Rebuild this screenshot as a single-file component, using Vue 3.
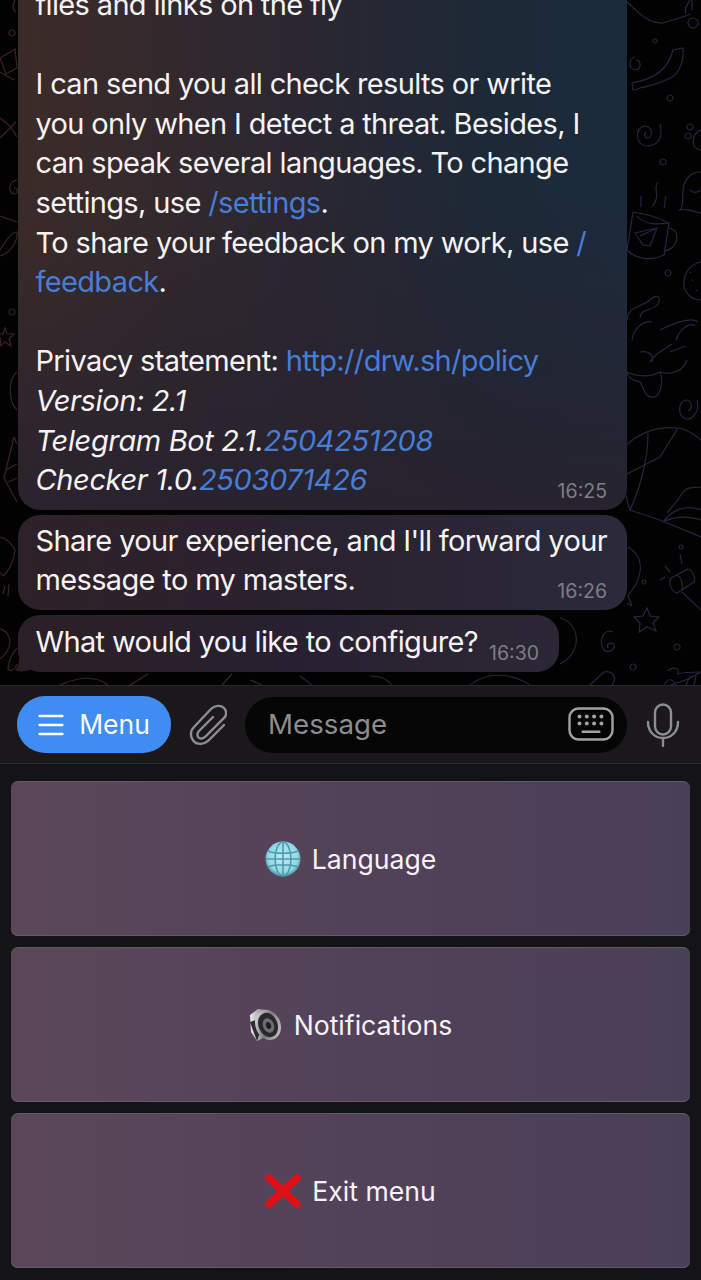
<script setup>
const keys = [
  { id: 'lang', label: 'Language', icon: 'globe' },
  { id: 'notif', label: 'Notifications', icon: 'speaker' },
  { id: 'exit', label: 'Exit menu', icon: 'cross' }
];

// doodles behind the chat, split by tint
const redDoodles = [
  'M15 0 C12 6 13 10 16 12 M12 30 a3 3 0 1 0 0.1 0',
  'M0 58 L15 49 L17 68 L6 74 Z M0 72 L14 80',
  'M0 118 L10 126 L17 137 M0 138 L16 122',
  'M17 180 C8 182 8 192 14 194 C19 194 18 188 14 188',
  'M0 250 C6 240 12 232 17 232 C18 240 12 252 0 256 M0 216 L17 222',
  'M12 309 a3 3 0 1 0 0.1 0',
  'M5 328 L7 334 L14 334 L9 339 L11 346 L5 342 L0 346 L1 339 L-3 334 L3 334 Z',
  'M17 372 C8 378 8 402 17 410',
  'M14 437 L4 478 L17 502 M14 437 L17 444 M6 470 L17 464 M8 482 L17 478',
  'M0 537 C6 538 12 544 15 550 C14 562 8 572 3 576 L0 572',
  'M3 594 L5 586 M8 596 L9 584',
  'M0 629 C6 630 10 636 10 642 C9 650 4 656 0 659',
  'M17 648 C12 654 8 662 8 670 C12 672 16 668 17 664',
  'M60 685 C80 676 96 676 108 685 M130 685 L148 674 M222 685 L232 674 M250 680 L262 685'
];
const blueDoodles = [
  'M627 2 C638 12 648 24 663 23 C672 20 682 18 690 14 M693 18 a5 5 0 1 0 0.1 0 M692 0 V10 M690 0 C686 6 684 10 686 14',
  'M632 83 C650 80 668 72 673 50 L683 48 C684 60 680 72 672 77 C660 84 648 86 640 88 C636 90 633 90 633 90 L632 83',
  'M635 57 C628 58 628 70 636 70 C642 68 641 60 636 60',
  'M655 39 a2 2 0 1 0 0.1 0 M670 95 a3 3 0 1 0 0.1 0',
  'M660 124 C664 140 656 146 646 146 C636 144 634 130 644 126 C652 126 654 136 648 138 C644 138 644 134 646 132',
  'M701 130 C694 132 692 140 694 146 C697 150 701 150 701 150 M690 124 a3 3 0 1 0 0.1 0 M688 133 a3 3 0 1 0 0.1 0',
  'M663 159 a3 3 0 1 0 0.1 0',
  'M641 196 L641 207 M658 182 C652 190 662 194 652 207 M666 196 C664 200 666 204 664 208',
  'M633 212 C645 214 660 218 669 223 L664 255 C650 262 634 258 627 250 Z M637 216 C645 226 660 224 669 223 M669 228 C682 230 678 250 664 251 M635 233 L657 228 L650 246 L643 245 Z M640 236 L657 228',
  'M701 172 C690 172 684 180 683 190 C682 200 684 206 680 210 C688 208 694 212 701 213 M690 190 C694 194 698 192 700 190',
  'M668 270 a3 3 0 1 0 0.1 0',
  'M701 262 C690 264 683 274 684 286 C686 296 694 300 701 300 M692 280 L693 281 M696 290 L697 291 M690 272 L691 273',
  'M627 320 C628 306 640 308 650 300 C656 294 662 296 658 304 C652 312 640 308 640 318 M632 340 C634 326 646 320 652 322 M660 330 C672 324 690 316 698 322 M676 340 C680 328 690 322 695 326',
  'M627 372 C634 376 650 378 660 372 C664 382 660 396 654 397 C644 398 644 388 640 382 C632 380 628 378 627 372 M650 362 C654 354 666 348 672 344 M660 372 C672 376 684 370 687 360 M640 352 C650 350 654 356 652 362 M670 352 L686 346',
  'M697 400 C700 412 692 420 686 419 C677 416 678 402 686 400 C692 400 693 410 688 411',
  'M625 447 C636 434 656 426 677 428 C686 428 694 434 701 440 M678 428 L660 457 L625 475 M648 433 C648 450 644 480 630 510 M625 480 C624 494 628 504 630 510 L660 520 L701 537',
  'M667 513 C672 506 676 504 683 492 C688 486 694 488 701 487 M664 521 C672 510 686 504 701 510 M662 522 C676 516 690 516 701 520',
  'M628 547 C636 552 642 560 640 572 C638 584 632 590 628 596 L632 606 M627 603 L632 606',
  'M681 545 a2 2 0 1 0 0.1 0 M680 554 L682 564 M665 566 L670 572 M660 580 L665 577 M644 580 a2 2 0 1 0 0.1 0',
  'M671 578 L688 569 C692 570 696 578 694 582 L677 593 C672 592 668 584 671 578 M677 575 C681 577 683 583 682 590 M682 592 L701 610',
  'M647 608 L650 616 L659 617 L653 623 L656 631 L647 627 L639 632 L640 623 L634 617 L643 616 Z',
  'M613 632 C604 628 598 640 604 650 C610 654 616 648 614 644 C610 642 606 644 608 648',
  'M677 644 a3 3 0 1 0 0.1 0 M633 664 a3 3 0 1 0 0.1 0',
  'M668 671 C672 666 680 668 678 674 C684 672 694 672 701 672 M664 685 C668 678 672 678 676 685 M686 685 L690 676 M694 685 L696 676',
  'M560 618 C570 620 578 630 576 644 C574 654 568 660 560 664',
  'M300 676 L312 685 M370 676 C380 676 388 680 392 685 M470 685 C486 672 510 672 530 685 M590 685 L604 672 C612 670 618 678 612 685',
  'M700 672 C690 680 680 682 670 685'
];
</script>

<template>
  <div class="screen">
    <section class="chat">
      <svg class="doodles" width="701" height="685" viewBox="0 0 701 685" fill="none">
        <path v-for="d in redDoodles" :key="d" :d="d" stroke="#3a2320" stroke-width="1.2" />
        <path v-for="d in blueDoodles" :key="d" :d="d" stroke="#26253f" stroke-width="1.2" />
      </svg>

      <div class="bubble first">
        <p>files and links on the fly</p>
        <p class="blank"></p>
        <p>I can send you all check results or write</p>
        <p>you only when I detect a threat. Besides, I</p>
        <p>can speak several languages. To change</p>
        <p>settings, use <a>/settings</a>.</p>
        <p>To share your feedback on my work, use <a>/</a></p>
        <p><a>feedback</a>.</p>
        <p class="blank"></p>
        <p>Privacy statement: <a>http://drw.sh/policy</a></p>
        <p><em>Version: 2.1</em></p>
        <p><em>Telegram Bot 2.1.<a>2504251208</a></em></p>
        <p><em>Checker 1.0.<a>2503071426</a></em></p>
        <span class="time">16:25</span>
      </div>

      <div class="bubble second">
        <p>Share your experience, and I'll forward your</p>
        <p>message to my masters.</p>
        <span class="time">16:26</span>
      </div>

      <div class="bubble third">
        <p>What would you like to configure?</p>
        <span class="time">16:30</span>
        <svg class="tail" width="16" height="14" viewBox="0 0 16 14">
          <path d="M16 0 L4 0 C4 5 3 9 0 12.5 C5 14 11 14 16 11 Z" fill="#2b2026" />
        </svg>
      </div>
    </section>

    <section class="inputbar">
      <button class="menu-btn">
        <svg width="26" height="22" viewBox="0 0 26 22" fill="none" stroke="#fff" stroke-width="2.3" stroke-linecap="round">
          <path d="M1.5 2H24.5M1.5 11H24.5M1.5 20H24.5" />
        </svg>
        <span>Menu</span>
      </button>
      <svg class="clip" width="38" height="42" viewBox="0 0 38 42" fill="none" stroke="#8e8e90" stroke-width="2.4" stroke-linecap="round">
        <path d="M35 21 L20 36 C15 41 8 41 4.5 37 C1 33 1 27 5 23 L22 5 C26 1 32 1 35 4 C38 7 38 12 34 15 L17 32 C14 35 11 35 9.5 33.5 C8 32 8 29 10 27 L24 13" />
      </svg>
      <div class="field">
        <span>Message</span>
        <svg width="46" height="36" viewBox="0 0 46 36" fill="none">
          <rect x="1.5" y="1.5" width="43" height="31" rx="9" stroke="#a3a3a3" stroke-width="2.4" />
          <g fill="#a3a3a3">
            <circle cx="11.5" cy="9.5" r="2" /><circle cx="18.8" cy="9.5" r="2" /><circle cx="26.1" cy="9.5" r="2" /><circle cx="33.4" cy="9.5" r="2" />
            <circle cx="11.5" cy="16.5" r="2" /><circle cx="18.8" cy="16.5" r="2" /><circle cx="26.1" cy="16.5" r="2" /><circle cx="33.4" cy="16.5" r="2" />
            <rect x="13.5" y="23.5" width="19" height="2.4" rx="1" />
          </g>
        </svg>
      </div>
      <svg class="mic" width="34" height="44" viewBox="0 0 34 44" fill="none" stroke="#8e8e90" stroke-width="2.4" stroke-linecap="round">
        <rect x="9" y="1.5" width="16" height="30" rx="8" />
        <path d="M2 19 C2 29 9 35 17 35 C25 35 32 29 32 19 M17 35 V43" />
      </svg>
    </section>

    <section class="keyboard">
      <button v-for="k in keys" :key="k.id" class="key">
        <svg v-if="k.icon === 'globe'" class="ico" width="36" height="36" viewBox="0 0 36 36">
          <defs>
            <radialGradient id="gl" cx="50%" cy="45%" r="55%">
              <stop offset="0" stop-color="#bfeaf2" />
              <stop offset="0.78" stop-color="#97d6e3" />
              <stop offset="1" stop-color="#3f8fa2" />
            </radialGradient>
          </defs>
          <circle cx="18" cy="18" r="17.5" fill="url(#gl)" />
          <g fill="none" stroke="#4a9db0" stroke-width="1.6">
            <ellipse cx="18" cy="18" rx="8" ry="17" />
            <path d="M18 1V35M3 10C10 13 26 13 33 10M1 18H35M3 26C10 23 26 23 33 26" />
          </g>
        </svg>
        <svg v-else-if="k.icon === 'speaker'" class="ico" width="34" height="34" viewBox="0 0 34 34">
          <defs>
            <linearGradient id="sp" x1="0" y1="0" x2="1" y2="1">
              <stop offset="0" stop-color="#f2f2f2" />
              <stop offset="0.5" stop-color="#77777a" />
              <stop offset="1" stop-color="#dcdcdc" />
            </linearGradient>
            <linearGradient id="bk" x1="0" y1="0" x2="1" y2="0">
              <stop offset="0" stop-color="#ececec" />
              <stop offset="1" stop-color="#5f5f62" />
            </linearGradient>
          </defs>
          <path d="M1 7 L9 1 L20 2 L14 30 L8 33 L2 24 Z" fill="url(#bk)" />
          <path d="M1 14 L8 33 L12 22 L7 12 Z" fill="#2b2b2e" />
          <ellipse cx="19" cy="17" rx="12.5" ry="15.5" transform="rotate(-22 19 17)" fill="url(#sp)" />
          <ellipse cx="19" cy="17" rx="9.5" ry="12.5" transform="rotate(-22 19 17)" fill="#29292c" />
          <ellipse cx="19.5" cy="17.5" rx="5.5" ry="7.5" transform="rotate(-22 19.5 17.5)" fill="#6e6e72" />
          <ellipse cx="19.5" cy="17.5" rx="2.5" ry="3.5" transform="rotate(-22 19.5 17.5)" fill="#1c1c1f" />
        </svg>
        <svg v-else class="ico" width="36" height="34" viewBox="0 0 36 34" fill="none" stroke="#e30f17" stroke-width="7.5" stroke-linecap="round">
          <path d="M4 4 L32 30M32 4 L4 30" />
        </svg>
        <span>{{ k.label }}</span>
      </button>
    </section>
  </div>
</template>

<style scoped>
.screen {
  width: 701px;
  height: 1280px;
  overflow: hidden;
  display: flex;
  flex-direction: column;
  background: #000;
  color: #fff;
  font-family: Inter, "Liberation Sans", sans-serif;
}
.chat {
  position: relative;
  height: 685px;
  overflow: hidden;
  display: flex;
  flex-direction: column;
  justify-content: flex-end;
  align-items: flex-start;
  gap: 5px;
  padding: 0 0 13px 18px;
  box-sizing: border-box;
  background: #020203;
}
.doodles {
  position: absolute;
  left: 0;
  top: 0;
}
.bubble {
  position: relative;
  flex-shrink: 0;
  box-sizing: border-box;
  padding: 6px 18px 10px 17.5px;
  border-radius: 22px;
  font-size: 29px;
  line-height: 39.6px;
  letter-spacing: -0.65px;
  color: #f4f2f2;
}
.bubble p {
  margin: 0;
  white-space: nowrap;
}
.bubble .blank {
  height: 39.6px;
}
.bubble a {
  color: #477dd6;
}
.bubble em {
  font-style: italic;
  letter-spacing: -0.37px;
}
.first {
  width: 609px;
  background:
    linear-gradient(180deg, rgba(40, 34, 44, 0) 40%, rgba(40, 34, 46, 0.9) 100%),
    linear-gradient(90deg, #3c2b28 0%, #2b2731 45%, #1c2937 80%, #1b2b3c 100%);
}
.second {
  width: 609px;
  background: linear-gradient(90deg, #2e2128 0%, #2a2230 50%, #2b2a3a 100%);
}
.third {
  width: 541px;
  height: 57px;
  padding-top: 7px;
  background: linear-gradient(90deg, #2b2026 0%, #282030 50%, #2c2736 100%);
}
.tail {
  position: absolute;
  left: -3px;
  bottom: 0;
}
.time {
  position: absolute;
  right: 20px;
  bottom: 8px;
  font-size: 19.5px;
  line-height: 22px;
  letter-spacing: 0;
  color: #7f7e86;
}
.inputbar {
  height: 79px;
  box-sizing: border-box;
  display: flex;
  align-items: center;
  padding: 0 20px 0 17px;
  background: #1b181b;
  border-top: 1px solid #2a282b;
  border-bottom: 1px solid #2d2b2e;
}
.menu-btn {
  width: 154px;
  height: 57px;
  flex-shrink: 0;
  display: flex;
  align-items: center;
  justify-content: center;
  gap: 15px;
  border: none;
  border-radius: 28px;
  background: #3f8cf3;
  color: #fff;
  font: 400 26.5px Inter, "Liberation Sans", sans-serif;
  padding: 0;
}
.menu-btn span,
.field span {
  margin-top: -2px;
}
.clip {
  margin-left: 18px;
  flex-shrink: 0;
}
.field {
  width: 382px;
  height: 56px;
  margin-left: 18px;
  flex-shrink: 0;
  box-sizing: border-box;
  display: flex;
  align-items: center;
  justify-content: space-between;
  padding: 0 13px 0 23px;
  border-radius: 28px;
  background: #050506;
  color: #8c8c8e;
  font-size: 27.7px;
}
.mic {
  margin-left: 19px;
  flex-shrink: 0;
}
.keyboard {
  flex: 1;
  display: flex;
  flex-direction: column;
  gap: 11px;
  padding: 17px 11px 11px;
  background: #141316;
}
.key {
  height: 155px;
  flex-shrink: 0;
  display: flex;
  align-items: center;
  justify-content: center;
  gap: 11px;
  padding: 0;
  border: none;
  border-radius: 7px;
  border-top: 1px solid #635768;
  background: linear-gradient(90deg, #5b4759 0%, #544359 40%, #4e4058 75%, #4a3f59 100%);
  box-shadow: inset 0 -1px 0 #655a6b;
  color: #f7f2f8;
  font: 400 26.6px Inter, "Liberation Sans", sans-serif;
}
.ico {
  flex-shrink: 0;
}
</style>
